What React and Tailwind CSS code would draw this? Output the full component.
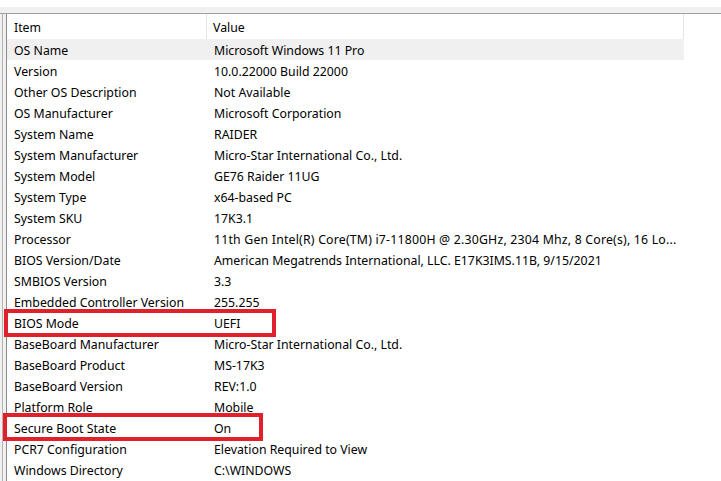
const rows = [
  ["OS Name", "Microsoft Windows 11 Pro"],
  ["Version", "10.0.22000 Build 22000"],
  ["Other OS Description", "Not Available"],
  ["OS Manufacturer", "Microsoft Corporation"],
  ["System Name", "RAIDER"],
  ["System Manufacturer", "Micro-Star International Co., Ltd."],
  ["System Model", "GE76 Raider 11UG"],
  ["System Type", "x64-based PC"],
  ["System SKU", "17K3.1"],
  ["Processor", "11th Gen Intel(R) Core(TM) i7-11800H @ 2.30GHz, 2304 Mhz, 8 Core(s), 16 Lo..."],
  ["BIOS Version/Date", "American Megatrends International, LLC. E17K3IMS.11B, 9/15/2021"],
  ["SMBIOS Version", "3.3"],
  ["Embedded Controller Version", "255.255"],
  ["BIOS Mode", "UEFI"],
  ["BaseBoard Manufacturer", "Micro-Star International Co., Ltd."],
  ["BaseBoard Product", "MS-17K3"],
  ["BaseBoard Version", "REV:1.0"],
  ["Platform Role", "Mobile"],
  ["Secure Boot State", "On"],
  ["PCR7 Configuration", "Elevation Required to View"],
  ["Windows Directory", "C:\\WINDOWS"],
];

export default function App() {
  return (
    <div className="w-[721px] h-[481px] overflow-hidden bg-white text-[12.3px] text-black font-['Noto_Sans','Open_Sans',sans-serif]">
      {/* top strip */}
      <div className="h-[7px] bg-white" />
      <div className="h-[6px] bg-[#f0f0f0] border-b border-[#a0a0a0] box-content" />

      <div className="relative flex">
        {/* left gutter */}
        <div className="w-[7px] h-[468px] flex bg-[#f0f0f0]">
          <div className="w-[2px]" />
          <div className="w-px bg-[#b4b4b4]" />
          <div className="w-[3px]" />
          <div className="w-px bg-[#8a8a8a]" />
        </div>

        {/* list view */}
        <div className="w-[677px]">
          <div className="flex h-[25px]">
            <div className="w-[200px] h-full flex items-center pt-[3px] pl-[7px] border-r border-[#e5e5e5]">Item</div>
            <div className="flex-1 h-full flex items-center pt-[3px] pl-[6px] border-r border-[#e5e5e5]">Value</div>
          </div>
          {rows.map(([item, value], i) => (
            <div
              key={item}
              className={`flex h-[21px] items-center pt-[3px] ${i === 0 ? "bg-[#f0f0f0]" : ""}`}
            >
              <div className="w-[201px] shrink-0 pl-[7px] whitespace-nowrap">{item}</div>
              <div className={`flex-1 pl-[6px] whitespace-nowrap ${item === "Processor" ? "tracking-[0.2px]" : ""}`}>{value}</div>
            </div>
          ))}
        </div>

        {/* red annotation boxes */}
        <div className="absolute left-[4px] top-[295px] w-[272px] h-[28px] border-4 border-[#e0202a]" />
        <div className="absolute left-[3px] top-[399px] w-[260px] h-[28px] border-4 border-[#e0202a]" />
      </div>
    </div>
  );
}
